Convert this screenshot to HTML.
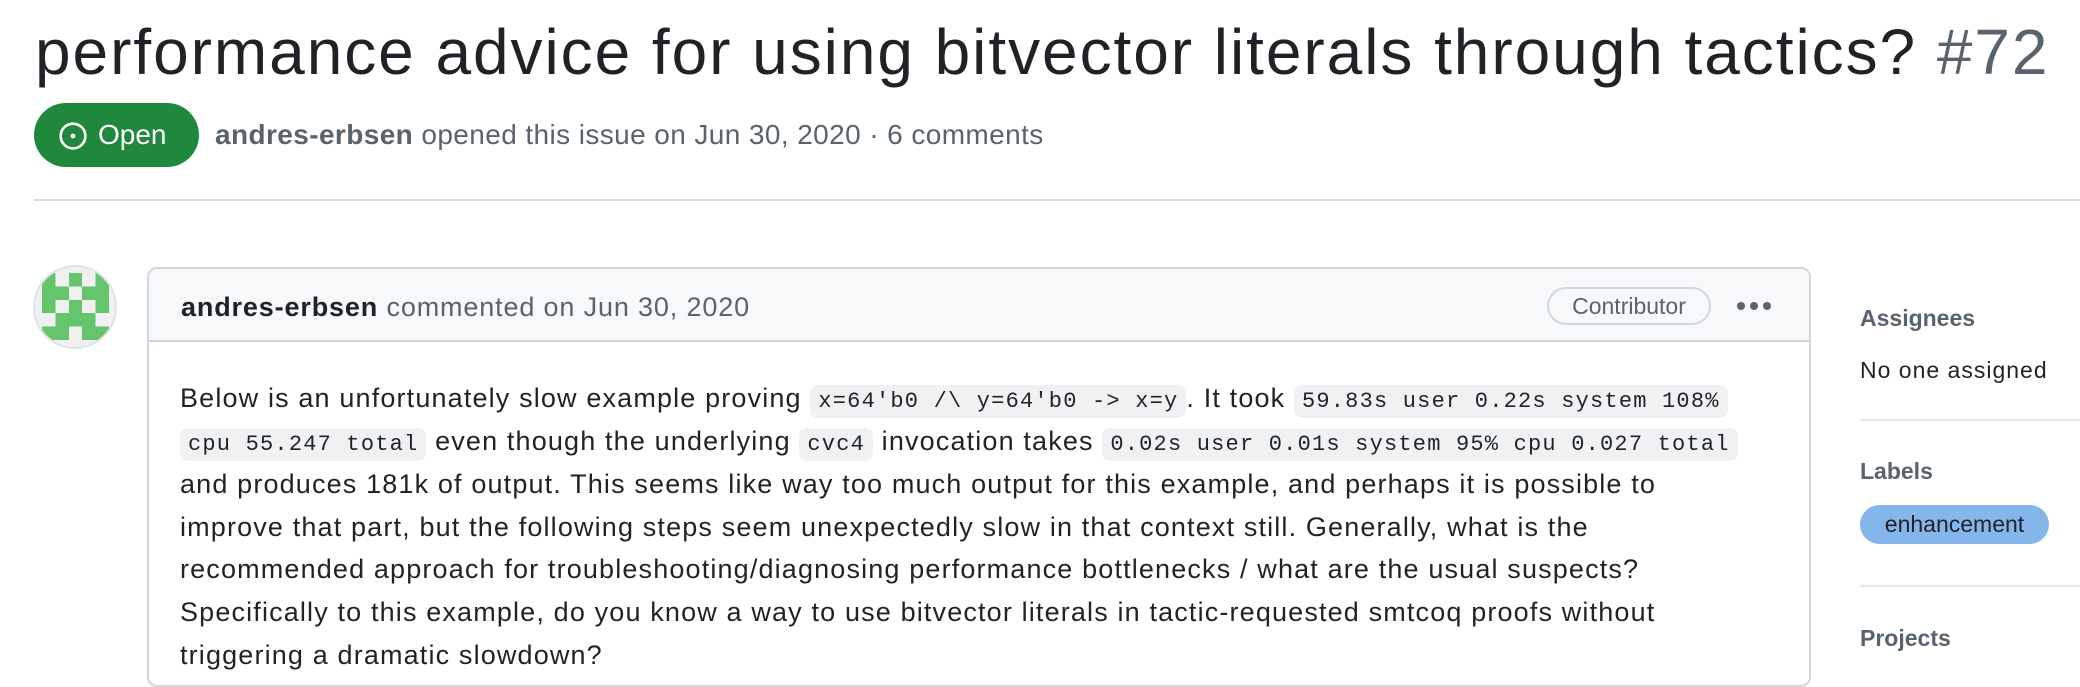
<!DOCTYPE html>
<html><head><meta charset="utf-8"><style>
*{margin:0;padding:0;box-sizing:border-box}
body{width:2080px;height:672px;overflow:hidden;background:#fff;font-family:"Liberation Sans","DejaVu Sans",sans-serif;color:#1f2328;position:relative}
.a{position:absolute;white-space:nowrap}
.title{left:35px;top:14px;font-size:64px;line-height:76px;color:#1f2328;letter-spacing:1.95px}
.title span{color:#59636e}
.badge{left:34px;top:103px;width:165px;height:64px;border-radius:32px;background:#1f883d;color:#fff;font-size:28px;line-height:64px;padding-left:64px}
.meta{left:215px;top:118px;font-size:28px;line-height:34px;color:#59636e;letter-spacing:0.4px}
.meta b{color:#59636e}
.hr{left:34px;top:199px;width:2046px;height:2px;background:#d8dee4}
.av{left:33px;top:265px;width:84px;height:84px;border-radius:50%;overflow:hidden;border:2px solid #e0e3e6;background:#f0f0f0}
.box{left:147px;top:267px;width:1664px;height:420px;border:2px solid #d0d7de;border-radius:10px}
.hd{left:149px;top:269px;width:1660px;height:73px;background:#f6f8fa;border-bottom:2px solid #d0d7de;border-radius:8px 8px 0 0}
.htxt{left:181px;top:290px;font-size:27px;line-height:34px;color:#59636e;letter-spacing:0.85px}
.htxt b{color:#1f2328}
.contrib{left:1547px;top:287px;width:164px;height:38px;border:2px solid #d0d7de;border-radius:19px;font-size:23px;line-height:34px;text-align:center;color:#59636e}
.dot{top:302px;width:8px;height:8px;border-radius:50%;background:#59636e}
.body{left:180px;font-size:27px;line-height:43px;color:#1f2328;letter-spacing:1.15px}
code{font-family:"Liberation Mono","DejaVu Sans Mono",monospace;font-size:22px;letter-spacing:1.2px;background:#eff1f3;border-radius:8px;padding:4px 8px}
.sh{left:1860px;font-size:23px;font-weight:bold;color:#59636e;line-height:30px}
.sd{left:1860px;width:220px;height:2px;background:#e4e8ec}
.pill{left:1860px;top:505px;width:189px;height:39px;border-radius:20px;background:#84b6eb;color:#1f2328;font-size:23px;line-height:39px;text-align:center}
</style></head><body>
<div class="a title">performance advice for using bitvector literals through tactics? <span>#72</span></div>
<div class="a badge"><svg style="position:absolute;left:24px;top:18px" width="30" height="30" viewBox="0 0 16 16"><circle cx="8" cy="8" r="6.6" fill="none" stroke="#fff" stroke-width="1.4"/><circle cx="8" cy="8" r="1.3" fill="#fff"/></svg>Open</div>
<div class="a meta"><b>andres-erbsen</b> opened this issue on Jun 30, 2020 · 6 comments</div>
<div class="a hr"></div>
<div class="a av"><svg style="position:absolute;left:7px;top:6px" width="67" height="67" viewBox="0 0 5 5" shape-rendering="crispEdges"><g fill="#65c56c">
<rect x="0" y="0" width="1" height="1"/><rect x="2" y="0" width="1" height="1"/><rect x="4" y="0" width="1" height="1"/>
<rect x="0" y="1" width="2" height="1"/><rect x="3" y="1" width="2" height="1"/>
<rect x="0" y="2" width="1" height="1"/><rect x="2" y="2" width="1" height="1"/><rect x="4" y="2" width="1" height="1"/>
<rect x="1" y="3" width="3" height="1"/>
<rect x="0" y="4" width="2" height="1"/><rect x="3" y="4" width="2" height="1"/>
</g></svg></div>
<div class="a box"></div>
<div class="a hd"></div>
<div class="a htxt"><b>andres-erbsen</b> commented on Jun 30, 2020</div>
<div class="a contrib">Contributor</div>
<div class="a dot" style="left:1737px"></div><div class="a dot" style="left:1750px"></div><div class="a dot" style="left:1763px"></div>
<div class="a body" style="top:377px">Below is an unfortunately slow example proving <code>x=64'b0 /\ y=64'b0 -&gt; x=y</code>. It took <code>59.83s user 0.22s system 108%</code></div>
<div class="a body" style="top:420px"><code>cpu 55.247 total</code> even though the underlying <code>cvc4</code> invocation takes <code>0.02s user 0.01s system 95% cpu 0.027 total</code></div>
<div class="a body" style="top:463px">and produces 181k of output. This seems like way too much output for this example, and perhaps it is possible to</div>
<div class="a body" style="top:506px">improve that part, but the following steps seem unexpectedly slow in that context still. Generally, what is the</div>
<div class="a body" style="top:548px">recommended approach for troubleshooting/diagnosing performance bottlenecks / what are the usual suspects?</div>
<div class="a body" style="top:591px">Specifically to this example, do you know a way to use bitvector literals in tactic-requested smtcoq proofs without</div>
<div class="a body" style="top:634px">triggering a dramatic slowdown?</div>
<div class="a sh" style="top:303px">Assignees</div>
<div class="a" style="left:1860px;top:355px;font-size:23px;line-height:30px;letter-spacing:1px">No one assigned</div>
<div class="a sd" style="top:419px"></div>
<div class="a sh" style="top:456px">Labels</div>
<div class="a pill">enhancement</div>
<div class="a sd" style="top:585px"></div>
<div class="a sh" style="top:623px">Projects</div>
</body></html>
